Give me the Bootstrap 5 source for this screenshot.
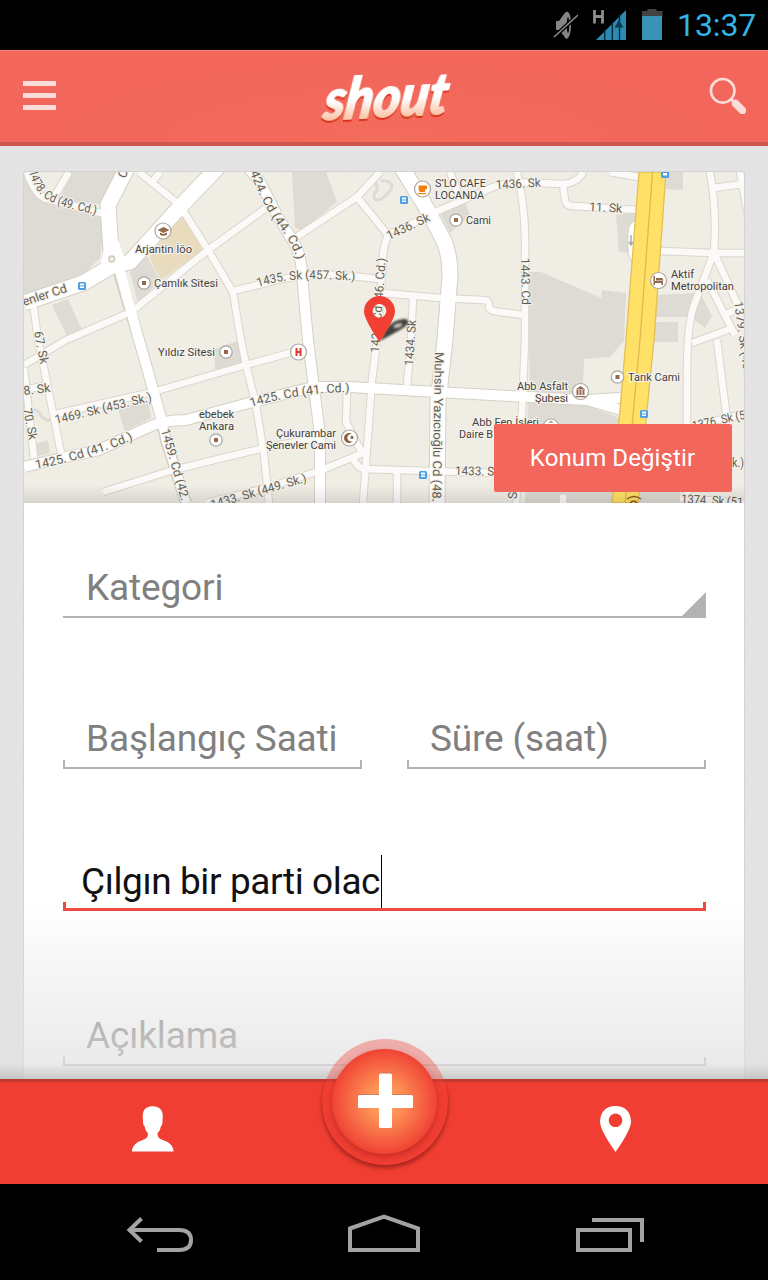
<!DOCTYPE html>
<html lang="tr">
<head>
<meta charset="utf-8">
<meta name="viewport" content="width=device-width, initial-scale=1">
<title>shout</title>
<link rel="stylesheet" href="https://cdn.jsdelivr.net/npm/bootstrap@5.3.0/dist/css/bootstrap.min.css">
<script src="https://cdn.jsdelivr.net/npm/bootstrap@5.3.0/dist/js/bootstrap.bundle.min.js"></script>
<style>
body{font-family:Roboto,"Noto Sans",sans-serif;background:#e0e0e0;width:768px;height:1280px;overflow:hidden}
svg{display:block;flex:none}
.statusbar{height:50px;background:#000;color:#33b5e5;padding-right:12px}
.clock{font-size:32px;line-height:52px;width:79px;letter-spacing:-.1px}
.topbar{height:96px;background:radial-gradient(ellipse 330px 80px at 50% 100%,#f46c5c,#f2665b);border-top:1px solid #f4877e;border-bottom:4px solid #cd574f;padding:0 22px 2px 23px}
.page{height:933px;padding:26px 24px 0;background-color:#e5e5e5;background-image:url("data:image/svg+xml,%3Csvg xmlns='http://www.w3.org/2000/svg' width='160' height='160'%3E%3Cfilter id='n'%3E%3CfeTurbulence type='fractalNoise' baseFrequency='.5' numOctaves='2' stitchTiles='stitch'/%3E%3CfeColorMatrix type='saturate' values='0'/%3E%3C/filter%3E%3Crect width='160' height='160' filter='url(%23n)' opacity='.08'/%3E%3C/svg%3E");overflow:hidden}
.sheet{height:907px;background:#fff;box-shadow:0 0 0 1px #d2d2d2;border-radius:2px 2px 0 0}
.mapbox{height:331px;border-radius:2px 2px 0 0;overflow:hidden}
.btn-place{right:12px;bottom:11px;width:238px;height:68px;background:#f2665b;color:#fff;font-size:24px;border:0;border-radius:2px;padding:0 1px 0 0;letter-spacing:.1px}
.fields{padding:55px 38px 0 39px}
.field{height:60px;color:#808080;font-size:37px;line-height:60px;letter-spacing:-.15px;padding-left:23px;white-space:nowrap;border-bottom:2px solid #b3b3b3}
.boxed{--c:#b3b3b3;--t:2px;border:0;background:linear-gradient(var(--c),var(--c)) left bottom/100% var(--t) no-repeat,linear-gradient(var(--c),var(--c)) left bottom/var(--t) 9px no-repeat,linear-gradient(var(--c),var(--c)) right bottom/var(--t) 9px no-repeat}
.active-field{--c:#ef4438;--t:3px;color:#111;padding-left:18px;letter-spacing:-.4px;line-height:62px}
.corner{width:24px;height:24px;background:#b3b3b3;clip-path:polygon(100% 0,100% 100%,0 100%);right:0;bottom:0}
.caret{width:1px;height:53px;background:#000;left:318px;top:4px}
.fade-out{left:0;right:0;bottom:0;height:180px;background:linear-gradient(rgba(0,0,0,0) 165px,rgba(0,0,0,.13)),linear-gradient(rgba(226,226,226,0),rgba(226,226,226,.78))}
.tabbar{height:105px;background:#f03e32;border-top:3px solid #bf3a31}
.fab{left:322px;top:-43px;width:126px;height:126px}
.sysbar{height:96px;background:#000}
.map text{font-family:Roboto,sans-serif;paint-order:stroke;stroke:#f5f3ee;stroke-width:2.4px;stroke-linejoin:round;fill:#665f53;font-size:12.3px}
.map .poi text{fill:#45413a;font-size:11.6px}
</style>
</head>
<body>
<header class="statusbar d-flex align-items-center justify-content-end">
  <svg width="25" height="30" viewBox="553 10 25 30"><path d="M556 21h3l5-7q2-3 4-2 3 2 3 13t-4 14q-2 0-3-3l-5-6h-3z" fill="#858585"/><ellipse cx="568" cy="25" rx="1.200" ry="8" fill="#000"/><path d="M553 38 578 15" stroke="#000" stroke-width="4"/><path d="M554 37 578 15" stroke="#8c8c8c" stroke-width="1.600"/></svg>
  <svg width="34" height="32" viewBox="593 9 34 32" style="margin:0 15px"><path d="M594.500 10v13.500M602.500 10v13.500M594.500 16.500h8" stroke="#8b8b8b" stroke-width="2.800" fill="none"/><path d="M596 40 626 10v30z" fill="#2b8ab3"/><path d="M604.700 30v10M612.300 22v18M619.500 14v26" stroke="#05222f" stroke-width="1.300"/><path d="M614.500 27.500 619 20l4.500 7.500z" fill="#0c3b4f"/></svg>
  <svg width="21" height="32" viewBox="642 9 21 32"><path d="M642 11h5.500V9h9v2h6v6H642z" fill="#424242"/><path d="M642 16h20v24h-20z" fill="#3a93b6"/></svg>
  <div class="clock" style="margin-left:14px">13:37</div>
</header>

<nav class="topbar d-flex align-items-center justify-content-between">
  <svg width="33" height="29" viewBox="0 0 33 29"><path d="M0 2.500h33M0 14.500h33M0 26.500h33" stroke="#fcdcd9" stroke-width="5"/></svg>
  <svg class="overflow-visible" width="140" height="64" viewBox="313 64 140 64" style="margin-left:4px">
    <defs><linearGradient id="ink" x1="0" y1="0" x2="0" y2="1"><stop offset=".55" stop-color="#fff"/><stop offset=".82" stop-color="#fbc6a8"/></linearGradient></defs>
    <g transform="rotate(-3 383 100) translate(22 0) skewX(-11)" font-family="Lato,sans-serif" font-weight="900" font-style="italic" font-size="56" stroke-linejoin="round">
      <text x="320" y="117" textLength="124" lengthAdjust="spacingAndGlyphs" fill="url(#ink)" stroke="url(#ink)" stroke-width="1.800" style="filter:drop-shadow(0 2px 0 #d9341c)">shout</text>
    </g>
  </svg>
  <svg width="37" height="37" viewBox="709 76 37 37"><circle cx="722.700" cy="89.800" r="11.800" fill="none" stroke="#fcdcd9" stroke-width="2.600"/><path d="m731 98 4 4" stroke="#fcdcd9" stroke-width="3"/><path d="m735.500 102.500 7 7" stroke="#fcdcd9" stroke-width="7.500" stroke-linecap="round"/></svg>
</nav>

<main class="page position-relative">
  <section class="sheet">
    <div class="mapbox position-relative">
      <svg class="map" width="720" height="331" viewBox="24 172 720 331">
        <defs>
          <g id="minor" fill="none" stroke-linejoin="round">
            <path d="M139 172 176 202 184 212 208 250 233 292 240 335 246 365 256 405 264 455 269 503M151 184 160 172M266 208 208 250 131 312 66 340 24 365M233 291 266 283Q300 273 340 275L380 279M69 172 54 197M27 172Q34 193 44 198L112 216M33 302 38 340 44 368 61 453M24 368 34 458M24 390 48 385M51 415 153 392 246 365 293 352M103 492 173 470 264 448 322 437M206 503 266 488 322 470 363 453"/>
            <path d="M380 172 357 197 295 238M357 197 388 235Q382 250 383 262L377 340 372 380 363 503M388 235 440 210 493 187Q510 181 540 183L563 184Q578 183 583 172M383 293 440 298 483 300Q490 300 489 307 489 311 500 312L523 315M413 298 411 340 407 385M450 172 460 198M517 172Q526 210 525 250L525 340 522 412 516 503M563 185 565 200Q566 206 573 206L637 210M610 172 638 177"/>
            <path d="M710 172Q717 210 714 252L693 308Q687 330 687 370L687 503M660 251 713 253 744 253M715 255 744 318M707 280 735 335M692 343 733 328M722 316 744 306M713 188 744 184M740 172 748 215M717 340 727 420M690 427 744 414M680 498 744 503M347 390 346 422 363 455M353 460 359 467 364 469 497 473M397 473 397 503M563 495 563 503"/>
          </g>
          <g id="major" fill="none" stroke-linejoin="round">
            <path d="M119 268 139 340 149 375 161 418" stroke-width="10"/>
            <path d="M246 165 260 182 277 215 297 248Q302 262 302 275L308 340 320 435V503" stroke-width="10"/>
            <path d="M161 418 166 440 186 503" stroke-width="9"/>
            <path d="M24 467 66 457 99 450 149 427Q163 420 186 420L249 403 313 387H350L437 392 510 396 587 400 620 398M587 400 621 410" stroke-width="10"/>
          </g>
          <g id="wide" fill="none" stroke-linejoin="round"><path d="M220 165 179 208 130 262 112 266 83 283 24 303M127 168 108 205Q110 235 112 266M402 168 423 202 442 237Q450 252 450 275L445 340 438 402 437 503"/></g>
          <linearGradient id="base" x1="0" y1="0" x2="0" y2="1"><stop offset="0" stop-color="#000" stop-opacity="0"/><stop offset="1" stop-color="#000" stop-opacity=".1"/></linearGradient>
          <filter id="soft" x="-30%" y="-30%" width="160%" height="160%"><feGaussianBlur stdDeviation="1.200"/></filter>
          <path id="l1" d="M29 171Q34 192 48 200T112 218"/>
          <path id="l2" d="M250 172Q262 205 280 228T298 270"/>
          <path id="l3" d="M258 287Q285 278 320 279L370 281"/>
          <path id="l4" d="M56 424 160 399"/><path id="l5" d="M36 469Q85 460 138 438"/><path id="l6" d="M251 407Q300 392 356 392"/>
        </defs>
        <path fill="#f0ede5" d="M24 172h720v331H24z"/>
        <path fill="#dedad4" d="M69 172h53l-17 33-45-5zM24 172h6l10 28 66 15-6 43-17 17-59 22zM130 272l17-16 13 24-22 24zM52 305l16-6 14 31-15 6zM292 172h34l11 30-34 28-8-2zM440 213l25-10 5 12-20 18zM214 349l26-9 3 22-28 8zM118 409l30-9 3 18-26 13zM36 444l12-4 2 13-12 3zM528 272h13l60 26 1-8 24 3-2 48-14 16-26 2-1 24 6 16-59-4zM528 402l59 4 33 12-5 85h-90zM616 215l21-2-5 40-13-1zM667 172h16v18l-17-1zM657 295l43-2 12 23-7 12-15-11-34 0zM655 322h23v20h-24zM640 478h40v25h-43zM63 338l8-3 6 2-9 4z"/>
        <path fill="#e9dbbd" d="M182 214 203 250 161 280 149 257z"/>
        <g fill="none" stroke="#dedad4" stroke-width="3"><path d="M374 181q4 5 3 9-6 8 0 10 4 1 11-7 7-6 1-11-3-2-8-1M28 411q10-3 12 3 4 7 10 6"/></g>
        <use href="#minor" stroke="#dbd6cb" stroke-width="8.500"/>
        <use href="#wide" stroke="#d5d0c4" stroke-width="17"/>
        <g stroke="#d5d0c4"><path d="M117 266 139 340 149 375 161 418M246 165 260 182 277 215 297 248Q302 262 302 275L308 340 320 435V503M161 418 166 440 186 503M24 467 66 457 99 450 149 427Q163 420 186 420L249 403 313 387H350L437 392 510 396 587 400 620 398M587 400 621 410" fill="none" stroke-width="12"/></g>
        <use href="#minor" stroke="#fbfaf8" stroke-width="6.500"/>
        <use href="#major" stroke="#fff"/>
        <use href="#wide" stroke="#fff" stroke-width="15"/>
        <path d="M100 268 106 240 118 240 124 256 140 262 117 272z" fill="#fff"/>
        <circle cx="111.700" cy="259" r="3" fill="#f0ede5" stroke="#cfc9ba" stroke-width="1.300"/>
        <path d="M638 220q-10 2-10 14v14q0 12 6 14" fill="#fff" stroke="#d5d0c4"/>
        <path d="M631 235v9m-2-2 2 3 2-3" stroke="#aaa" stroke-width="1.500" fill="none"/>
        <path d="M639 172h27L654 340 648 400 638 503H612L620 410 626 340z" fill="#ffe168" stroke="#e4bf54" stroke-width="1.300"/>
        <path d="M652.500 172 640 340 634 405 625 503" fill="none" stroke="#dfb950" stroke-width="1.300"/>

        <g class="roads">
          <text><textPath href="#l1" textLength="86" lengthAdjust="spacingAndGlyphs">1478. Cd (49. Cd.)</textPath></text>
          <text transform="translate(125 179) rotate(-65)">C</text>
          <text><textPath href="#l2" textLength="100" lengthAdjust="spacingAndGlyphs">424. Cd (44. Cd.)</textPath></text>
          <text><textPath href="#l3" textLength="98" lengthAdjust="spacingAndGlyphs">1435. Sk (457. Sk.)</textPath></text>
          <text transform="translate(24 306) rotate(-18)" textLength="46" lengthAdjust="spacingAndGlyphs">enler Cd</text>
          <text transform="translate(34 332) rotate(79)" textLength="33" lengthAdjust="spacingAndGlyphs">67. Sk</text>
          <text transform="translate(24 395) rotate(-7)" textLength="27" lengthAdjust="spacingAndGlyphs">8. Sk</text>
          <text transform="translate(23 409) rotate(79)" textLength="32" lengthAdjust="spacingAndGlyphs">70. Sk</text>
          <text><textPath href="#l4" textLength="99" lengthAdjust="spacingAndGlyphs">1469. Sk (453. Sk.)</textPath></text>
          <text><textPath href="#l5" textLength="102" lengthAdjust="spacingAndGlyphs">1425. Cd (41. Cd.)</textPath></text>
          <text><textPath href="#l6" textLength="100" lengthAdjust="spacingAndGlyphs">1425. Cd (41. Cd.)</textPath></text>
          <text transform="translate(161 430) rotate(74)" textLength="74" lengthAdjust="spacingAndGlyphs">1459. Cd (42.</text>
          <text transform="translate(212 509) rotate(-16)" textLength="99" lengthAdjust="spacingAndGlyphs">1433. Sk (449. Sk.)</text>
          <text transform="translate(389 240) rotate(-25)" textLength="46" lengthAdjust="spacingAndGlyphs">1436. Sk</text>
          <text transform="translate(496 189) rotate(-3)" textLength="45" lengthAdjust="spacingAndGlyphs">1436. Sk</text>
          <text transform="translate(589 211) rotate(3)" textLength="33" lengthAdjust="spacingAndGlyphs">11. Sk</text>
          <text transform="translate(379 353) rotate(-86)" textLength="95" lengthAdjust="spacingAndGlyphs">1422. Cd (46. Cd.)</text>
          <text transform="translate(413 366) rotate(-86)" textLength="46" lengthAdjust="spacingAndGlyphs">1434. Sk</text>
          <text transform="translate(521 258) rotate(89)" textLength="47" lengthAdjust="spacingAndGlyphs">1443. Cd</text>
          <text transform="translate(435 352) rotate(91)" textLength="150" lengthAdjust="spacingAndGlyphs">Muhsin Yazıcıoğlu Cd (48.</text>
          <text transform="translate(455 475) rotate(1)" textLength="45" lengthAdjust="spacingAndGlyphs">1433. Sk</text>
          <text transform="translate(734 302) rotate(82)" textLength="96" lengthAdjust="spacingAndGlyphs">1379. Sk (45. Sk.)</text>
          <text transform="translate(693 430) rotate(-12)" textLength="54" lengthAdjust="spacingAndGlyphs">1376. Sk (5</text>
          <text transform="translate(681 503) rotate(3)" textLength="62" lengthAdjust="spacingAndGlyphs">1374. Sk (51</text>
          <text x="732" y="467" textLength="12" lengthAdjust="spacingAndGlyphs">k.)</text>
          <text transform="translate(517 499) rotate(-90)">S</text>
        </g>

        <g class="poi">
          <text x="135" y="253" textLength="57" lengthAdjust="spacingAndGlyphs">Arjantin İöo</text>
          <text x="154" y="287" textLength="64" lengthAdjust="spacingAndGlyphs">Çamlık Sitesi</text>
          <text x="158" y="356" textLength="57" lengthAdjust="spacingAndGlyphs">Yıldız Sitesi</text>
          <text x="199" y="418" textLength="35" lengthAdjust="spacingAndGlyphs">ebebek</text><text x="199" y="430" textLength="35" lengthAdjust="spacingAndGlyphs">Ankara</text>
          <text x="276" y="437" textLength="60" lengthAdjust="spacingAndGlyphs">Çukurambar</text><text x="266" y="449" textLength="70" lengthAdjust="spacingAndGlyphs">Şenevler Cami</text>
          <text x="435" y="187" textLength="51" lengthAdjust="spacingAndGlyphs">S’LO CAFE</text><text x="435" y="199" textLength="49" lengthAdjust="spacingAndGlyphs">LOCANDA</text>
          <text x="466" y="224" textLength="25" lengthAdjust="spacingAndGlyphs">Cami</text>
          <text x="671" y="278" textLength="23" lengthAdjust="spacingAndGlyphs">Aktif</text><text x="671" y="290" textLength="63" lengthAdjust="spacingAndGlyphs">Metropolitan</text>
          <text x="628" y="381" textLength="52" lengthAdjust="spacingAndGlyphs">Tarık Cami</text>
          <text x="517" y="390" textLength="51" lengthAdjust="spacingAndGlyphs">Abb Asfalt</text><text x="535" y="402" textLength="33" lengthAdjust="spacingAndGlyphs">Şubesi</text>
          <text x="472" y="426" textLength="67" lengthAdjust="spacingAndGlyphs">Abb Fen İşleri</text><text x="459" y="438" textLength="34" lengthAdjust="spacingAndGlyphs">Daire B</text>
          <g fill="#fff" stroke="#aaa69e" stroke-width="1.200"><circle cx="163" cy="231" r="8"/><circle cx="422.500" cy="189" r="8"/><circle cx="658.500" cy="280.500" r="8"/><circle cx="580.500" cy="391.500" r="8"/><circle cx="551" cy="427" r="8"/><circle cx="349.500" cy="438" r="8"/><circle cx="298.500" cy="352" r="8"/><circle cx="144" cy="283" r="6.200"/><circle cx="226" cy="352" r="6.200"/><circle cx="216" cy="440" r="6.200"/><circle cx="456" cy="220" r="6.200"/><circle cx="617.500" cy="377" r="6.200"/></g>
          <path fill="#956a4c" d="M142 281h4v4h-4zM224 350h4v4h-4zM214 438h4v4h-4zM454 218h4v4h-4zM615.500 375h4v4h-4zM157.500 230l6-3 6 3-6 3zM160 232.500l3.500 1.500 3.500-1.500v2.500q-4 1.500-7 0zM653.500 276h1.500v5h8v4h-1.500v-2H655v2h-1.500zM656 278h6q1.500 1 1.500 2.500H656zM575.500 389.500l5-3.500 5 3.500zM576.500 390h2v5h-2zM579.500 390h2v5h-2zM582.500 390h2v5h-2zM575.500 396h10v1.300h-10zM548 422.500l3-1.500 3 1.500z"/>
          <path fill="#8a6040" d="M352 434a5 5 0 1 0 1 7 3.800 3.800 0 1 1-1-7zM352 435l.7 1.500 1.600.2-1.200 1.100.3 1.600-1.400-.8-1.400.8.3-1.600-1.200-1.100 1.600-.2z"/>
          <path fill="#f37f0b" d="M418.500 185.500h8q1.500 1 0 4h-1.500v2.500h-5q-1.500-1-1.500-6.500zM418 193h8v1.300h-8z"/>
          <path d="M296.500 348v8M300.500 348v8M296.500 352h4" stroke="#e03b30" stroke-width="2"/>
        </g>
        <g fill="#4c9fe8"><rect x="78" y="282" width="8" height="8" rx="1.500"/><rect x="400" y="196" width="8" height="8" rx="1.500"/><rect x="661" y="170" width="8" height="8" rx="1.500"/><rect x="640" y="410" width="8" height="8" rx="1.500"/><rect x="419" y="471" width="8" height="8" rx="1.500"/></g>
        <path fill="#fff" d="M80 283.500h4v2h-4zM80 286.500h4v1.500h-4zM402 197.500h4v2h-4zM402 200.500h4v1.500h-4zM663 173h4v2.500h-4zM642 411.500h4v2h-4zM642 414.500h4v1.500h-4zM421 472.500h4v2h-4zM421 475.500h4v1.500h-4z"/>
        <path d="M627 499q7-5 14 0M630 503q4-4 7 0" fill="none" stroke="#8b5b22" stroke-width="1.500"/>
        <path d="M380 341 386 329Q395 318 406 319 413 323 398 331z" fill="#222" opacity=".85" filter="url(#soft)"/>
        <ellipse cx="398" cy="325.500" rx="4.500" ry="2" transform="rotate(-18 398 326)" fill="#c9c6bf" filter="url(#soft)"/>
        <path fill="#f14033" fill-rule="evenodd" d="M379.500 342Q364 319 364 311.500a15.500 15.500 0 0 1 31 0Q395 319 379.500 342zM379.500 304a6.800 6.800 0 1 0 .01 0z"/>
        <path fill="url(#base)" d="M24 485h720v18H24z"/>
      </svg>
      <button class="btn btn-place position-absolute">Konum Değiştir</button>
    </div>
    <div class="fields">
      <div class="field position-relative">Kategori<span class="corner position-absolute"></span></div>
      <div class="d-flex justify-content-between" style="margin-top:91px">
        <div class="field boxed" style="width:299px">Başlangıç Saati</div>
        <div class="field boxed" style="width:299px">Süre (saat)</div>
      </div>
      <div class="field boxed active-field position-relative" style="margin-top:82px">Çılgın bir parti olac<span class="caret position-absolute"></span></div>
      <div class="field boxed" style="margin-top:95px">Açıklama</div>
    </div>
  </section>
  <div class="fade-out position-absolute"></div>
</main>

<nav class="tabbar position-relative">
  <div class="d-flex justify-content-between h-100" style="padding:24px 136px 0 131px">
    <svg width="44" height="46" viewBox="131 1106 44 46"><path fill="#fff" d="M132 1151.500q0-6 6-9.500l7-3q3-1.500 3-5.500-3-3-3.500-7.500-1.500-1-1.500-4l0-2q-2-13.500 9.500-13.700 12 .2 10 13.700v2q0 3-1.500 4-.5 4.500-3.500 7.500 0 4 3 5.500l7 3q6 3.500 6 9.500z"/></svg>
    <svg width="32" height="46" viewBox="600 1106 32 46"><path fill="#fff" fill-rule="evenodd" d="M615.500 1152Q600 1130 600 1121.500q1-15.500 15.500-15.500T631 1121.500Q631 1130 615.500 1152zM615.500 1113.500a6.800 6.800 0 1 0 .01 0z"/></svg>
  </div>
  <svg class="fab position-absolute overflow-visible" viewBox="322 1039 126 126">
    <defs><radialGradient id="glow"><stop offset="0" stop-color="#ffa866"/><stop offset=".35" stop-color="#fd8f55"/><stop offset="1" stop-color="#f04334"/></radialGradient>
    <clipPath id="low"><path d="M310 1082h150v100H310z"/></clipPath></defs>
    <circle cx="385" cy="1102" r="63" fill="#f03e32" fill-opacity=".36"/>
    <g clip-path="url(#low)"><circle cx="385" cy="1102" r="63" fill="#f03e32" style="filter:drop-shadow(0 3px 2px rgba(120,20,15,.65))"/></g>
    <circle cx="384.500" cy="1101.500" r="52.500" fill="url(#glow)" style="filter:drop-shadow(0 3px 3px rgba(150,25,20,.45))"/>
    <g fill="#fff" style="filter:drop-shadow(0 -1px 0 rgba(180,110,90,.55))"><rect x="379" y="1073.500" width="13" height="54.500" rx="1.500"/><rect x="358" y="1095" width="55" height="13" rx="1.500"/></g>
  </svg>
</nav>

<footer class="sysbar d-flex justify-content-between align-items-start" style="padding:30px 124px 0 126px">
  <svg width="68" height="40" viewBox="126 1214 68 40" fill="none" stroke="#a3a3a3" stroke-width="4"><path d="M131 1230h48q12 0 12 10t-12 10h-22M141.500 1218.500 129.500 1230 141.500 1241.500"/></svg>
  <svg width="72" height="40" viewBox="349 1214 72 40" fill="none" stroke="#a3a3a3" stroke-width="4" class="overflow-visible"><path d="M350 1228.500 384 1216.500 418 1228.500V1250H350z"/></svg>
  <svg width="68" height="40" viewBox="576 1214 68 40" fill="none" stroke="#a3a3a3" stroke-width="4"><path d="M578 1230h52v20h-52zM592 1220h50v22"/></svg>
</footer>
</body>
</html>
